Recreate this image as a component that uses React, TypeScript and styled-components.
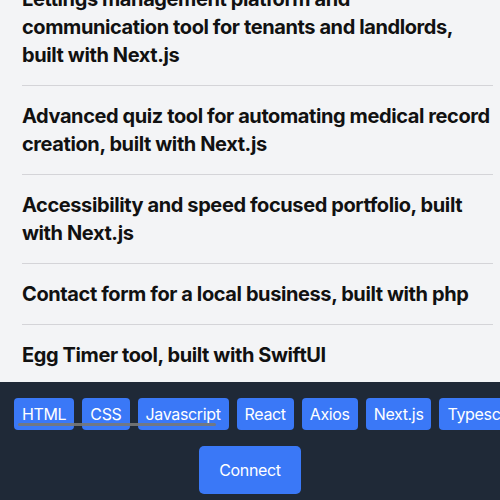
import styled, { createGlobalStyle } from 'styled-components';

const GlobalStyle = createGlobalStyle`
  html, body {
    margin: 0;
    padding: 0;
    overflow: hidden;
    background: #f3f4f6;
    font-family: Inter, "Noto Sans", sans-serif;
  }
`;

const Page = styled.div`
  display: flex;
  flex-direction: column;
`;

const ProjectList = styled.ul`
  list-style: none;
  margin: -31px 0 0;
  padding: 0 7px 0 22px;
`;

const ProjectItem = styled.li`
  padding: 16px 0;
  border-bottom: 1px solid #d4d4d8;

  &:last-child {
    border-bottom: none;
    padding-bottom: 13px;
  }
`;

const ProjectTitle = styled.h3`
  margin: 0;
  font-size: 20px;
  line-height: 28px;
  font-weight: 700;
  letter-spacing: -0.4px;
  color: #111111;
`;

const Footer = styled.footer`
  background: #1f2937;
  padding: 16px 14px;
  display: flex;
  flex-direction: column;
  align-items: center;
  gap: 16px;
`;

const TagTrack = styled.div`
  position: relative;
  align-self: stretch;
  margin-right: -14px;
`;

const TagRow = styled.div`
  display: flex;
  gap: 8px;
  overflow-x: auto;
  scrollbar-width: none;

  &::-webkit-scrollbar {
    display: none;
  }
`;

const Tag = styled.span`
  flex-shrink: 0;
  height: 32px;
  line-height: 32px;
  padding: 0 8px;
  border-radius: 4px;
  background: #3a78f7;
  color: #ffffff;
  font-size: 16px;
  letter-spacing: -0.35px;
`;

const ScrollThumb = styled.div`
  position: absolute;
  left: 4px;
  top: 25px;
  width: 198px;
  height: 3px;
  border-radius: 2px;
  background: rgba(120, 120, 120, 0.9);
`;

const ConnectButton = styled.button`
  height: 48px;
  padding: 0 20px;
  border: none;
  border-radius: 5px;
  background: #3a78f7;
  color: #ffffff;
  font-family: inherit;
  font-size: 16px;
  letter-spacing: -0.35px;
  cursor: pointer;
`;

const projects = [
  'Lettings management platform and communication tool for tenants and landlords, built with Next.js',
  'Advanced quiz tool for automating medical record creation, built with Next.js',
  'Accessibility and speed focused portfolio, built with Next.js',
  'Contact form for a local business, built with php',
  'Egg Timer tool, built with SwiftUI',
];

const skills = ['HTML', 'CSS', 'Javascript', 'React', 'Axios', 'Next.js', 'Typescript', 'Tailwind', 'Node.js'];

const App = () => (
  <>
    <GlobalStyle />
    <Page>
      <ProjectList>
        {projects.map((p) => (
          <ProjectItem key={p}>
            <ProjectTitle>{p}</ProjectTitle>
          </ProjectItem>
        ))}
      </ProjectList>
      <Footer>
        <TagTrack>
          <TagRow>
            {skills.map((s) => (
              <Tag key={s}>{s}</Tag>
            ))}
          </TagRow>
          <ScrollThumb />
        </TagTrack>
        <ConnectButton>Connect</ConnectButton>
      </Footer>
    </Page>
  </>
);

export default App;
